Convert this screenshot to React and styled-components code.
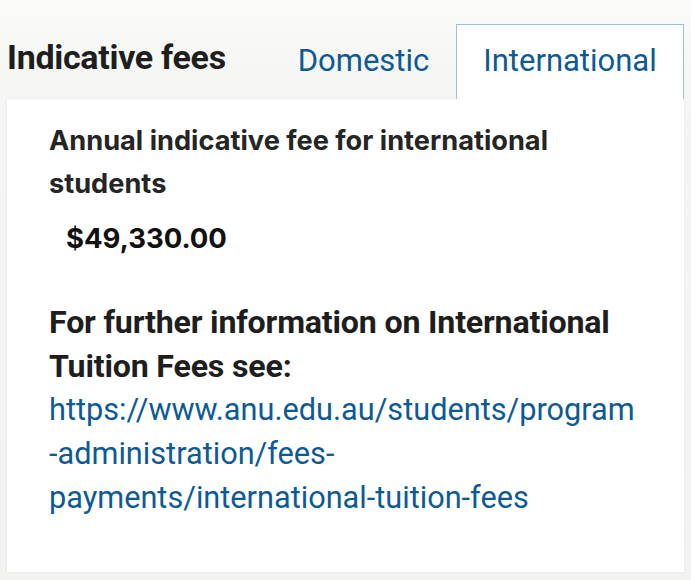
import React, { useState } from "react";
import styled, { createGlobalStyle } from "styled-components";

const GlobalStyle = createGlobalStyle`
  html, body {
    margin: 0;
    padding: 0;
  }
  body {
    background: linear-gradient(#fbfbfa 0px, #f5f5f3 80px, #f2f2f0 100%);
    font-family: Roboto, "Liberation Sans", sans-serif;
  }
`;

const Page = styled.div`
  width: 691px;
  height: 580px;
  padding: 24px 7px 0;
  box-sizing: border-box;
`;

const Header = styled.div`
  display: flex;
  align-items: flex-end;
  height: 75px;
`;

const Title = styled.h2`
  flex: 1;
  margin: 0 0 22px;
  font-family: Roboto, "Liberation Sans", sans-serif;
  font-size: 34px;
  line-height: 40px;
  font-weight: 700;
  color: #1e1e1e;
  letter-spacing: -0.3px;
  white-space: nowrap;
`;

const Tabs = styled.div`
  display: flex;
  align-self: stretch;
`;

const Tab = styled.button`
  width: ${({ w }) => w}px;
  background: ${({ active }) => (active ? "#ffffff" : "transparent")};
  border: 1px solid ${({ active }) => (active ? "#a0bfcd" : "transparent")};
  border-bottom: none;
  padding: 17px 0 0;
  box-sizing: border-box;
  display: flex;
  justify-content: center;
  font-family: Roboto, "Liberation Sans", sans-serif;
  font-size: 31px;
  font-weight: 400;
  color: #0d5a96;
  cursor: pointer;
`;

const Card = styled.div`
  background: #ffffff;
  height: 473px;
  box-sizing: border-box;
  padding: 20px 42px 0;
  box-shadow: 0 0 2px rgba(0, 0, 0, 0.08);
`;

const Lead = styled.h3`
  max-width: 570px;
  margin: 0;
  font-family: Inter, "Liberation Sans", sans-serif;
  font-size: 27.2px;
  font-weight: 700;
  line-height: 43px;
  color: #252525;
`;

const Amount = styled.div`
  margin: 16px 0 0 17px;
  font-family: Inter, "Liberation Sans", sans-serif;
  font-size: 27.5px;
  font-weight: 700;
  line-height: 34px;
  color: #111111;
`;

const Info = styled.p`
  margin: 45px 0 0;
  font-family: Roboto, "Liberation Sans", sans-serif;
  font-size: 32.2px;
  font-weight: 700;
  line-height: 44px;
  letter-spacing: -0.2px;
  color: #1e1e1e;
`;

const Link = styled.a`
  display: block;
  font-family: Roboto, "Liberation Sans", sans-serif;
  font-size: 30.7px;
  font-weight: 400;
  line-height: 44px;
  letter-spacing: 0;
  color: #0d5a96;
  text-decoration: none;
`;

export default function App() {
  const [tab, setTab] = useState("international");

  return (
    <>
      <GlobalStyle />
      <Page>
        <Header>
          <Title>Indicative fees</Title>
          <Tabs>
            <Tab w={185} active={tab === "domestic"} onClick={() => setTab("domestic")}>
              Domestic
            </Tab>
            <Tab w={228} active={tab === "international"} onClick={() => setTab("international")}>
              International
            </Tab>
          </Tabs>
        </Header>
        <Card>
          <Lead>Annual indicative fee for international students</Lead>
          <Amount>$49,330.00</Amount>
          <Info>
            For further information on International Tuition Fees see:
            <Link href="#">
              https://www.anu.edu.au/students/program
              <br />
              -administration/fees-
              <br />
              payments/international-tuition-fees
            </Link>
          </Info>
        </Card>
      </Page>
    </>
  );
}
